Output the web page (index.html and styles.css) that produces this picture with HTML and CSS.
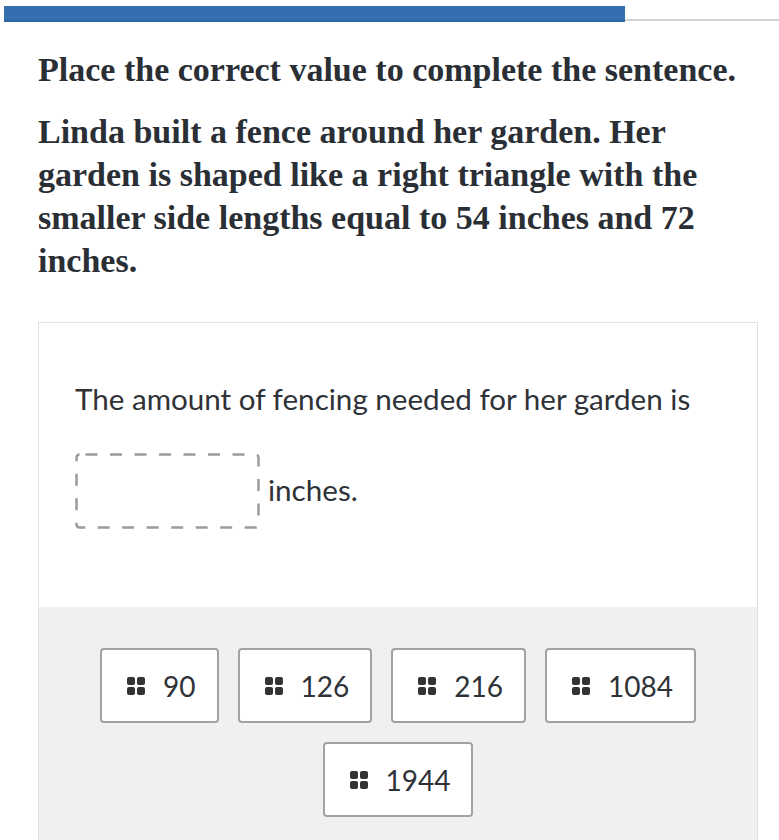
FILE: index.html
```html
<!DOCTYPE html>
<html lang="en">
<head>
<meta charset="utf-8">
<title>Question</title>
<link rel="stylesheet" href="styles.css">
</head>
<body>
<div class="progress">
  <div class="progress-fill"></div>
  <div class="progress-rest"></div>
</div>
<main class="content">
  <h1 class="title">Place the correct value to complete the sentence.</h1>
  <p class="prompt">Linda built a fence around her garden. Her garden is shaped like a right triangle with the smaller side lengths equal to 54 inches and 72 inches.</p>
  <section class="card">
    <div class="card-top">
      <p class="sentence">The amount of fencing needed for her garden is</p>
      <div class="answer-row">
        <div class="dropzone"></div>
        <span class="unit">inches.</span>
      </div>
    </div>
    <div class="card-bottom">
      <div class="chips">
        <div class="chip"><svg class="grip" viewBox="0 0 18 18"><rect x="0" y="0" width="8" height="8" rx="2"/><rect x="10" y="0" width="8" height="8" rx="2"/><rect x="0" y="10" width="8" height="8" rx="2"/><rect x="10" y="10" width="8" height="8" rx="2"/></svg><span>90</span></div>
        <div class="chip"><svg class="grip" viewBox="0 0 18 18"><rect x="0" y="0" width="8" height="8" rx="2"/><rect x="10" y="0" width="8" height="8" rx="2"/><rect x="0" y="10" width="8" height="8" rx="2"/><rect x="10" y="10" width="8" height="8" rx="2"/></svg><span>126</span></div>
        <div class="chip"><svg class="grip" viewBox="0 0 18 18"><rect x="0" y="0" width="8" height="8" rx="2"/><rect x="10" y="0" width="8" height="8" rx="2"/><rect x="0" y="10" width="8" height="8" rx="2"/><rect x="10" y="10" width="8" height="8" rx="2"/></svg><span>216</span></div>
        <div class="chip"><svg class="grip" viewBox="0 0 18 18"><rect x="0" y="0" width="8" height="8" rx="2"/><rect x="10" y="0" width="8" height="8" rx="2"/><rect x="0" y="10" width="8" height="8" rx="2"/><rect x="10" y="10" width="8" height="8" rx="2"/></svg><span>1084</span></div>
        <div class="chip"><svg class="grip" viewBox="0 0 18 18"><rect x="0" y="0" width="8" height="8" rx="2"/><rect x="10" y="0" width="8" height="8" rx="2"/><rect x="0" y="10" width="8" height="8" rx="2"/><rect x="10" y="10" width="8" height="8" rx="2"/></svg><span>1944</span></div>
      </div>
    </div>
  </section>
</main>
</body>
</html>
```
FILE: styles.css
```css
html, body {
  margin: 0;
  padding: 0;
  background: #ffffff;
}
body {
  height: 840px;
  overflow: hidden;
}
.progress {
  display: flex;
  align-items: flex-end;
  padding: 6px 0 0 4px;
  height: 16px;
}
.progress-fill {
  width: 621px;
  height: 16px;
  background: #3470b0;
  box-sizing: border-box;
  border-bottom: 2px solid #2d65a3;
}
.progress-rest {
  flex: 1;
  height: 2px;
  margin-bottom: 1px;
  background: #d2d2d2;
}
.content {
  padding: 26px 0 0 38px;
}
.title {
  margin: 0;
  font-family: "Liberation Serif", "Times New Roman", serif;
  font-weight: bold;
  font-size: 34px;
  line-height: 43px;
  color: #2a2e35;
}
.prompt {
  margin: 19px 38px 0 0;
  font-family: "Liberation Serif", "Times New Roman", serif;
  font-weight: bold;
  font-size: 34px;
  line-height: 43px;
  color: #2a2e35;
}
.card {
  margin-top: 40px;
  width: 720px;
  box-sizing: border-box;
  border: 1px solid #e1e1e1;
  border-bottom: none;
}
.card-top {
  background: #ffffff;
  padding: 58px 36px 0 36px;
  height: 284px;
  box-sizing: border-box;
}
.sentence {
  margin: 0;
  font-family: Lato, "Liberation Sans", sans-serif;
  font-size: 29.6px;
  line-height: 35px;
  color: #2f3237;
}
.answer-row {
  display: flex;
  align-items: center;
  gap: 8px;
  margin-top: 37px;
}
.dropzone {
  width: 185px;
  height: 76px;
  box-sizing: border-box;
  background-image: url("data:image/svg+xml,%3Csvg xmlns='http://www.w3.org/2000/svg' width='185' height='76'%3E%3Crect x='1.5' y='1.5' width='182' height='73' rx='3' fill='none' stroke='%239b9b9b' stroke-width='2.5' stroke-dasharray='12 12.5' stroke-dashoffset='-6'/%3E%3C/svg%3E");
  background-repeat: no-repeat;
}
.unit {
  font-family: Lato, "Liberation Sans", sans-serif;
  font-size: 29.6px;
  color: #2f3237;
  margin-top: -3px;
}
.card-bottom {
  background: #f0f0f0;
  padding: 41px 20px 0 20px;
  height: 233px;
  box-sizing: border-box;
  overflow: hidden;
}
.chips {
  display: flex;
  flex-wrap: wrap;
  justify-content: center;
  gap: 19px 19px;
}
.chip {
  display: flex;
  align-items: center;
  gap: 18px;
  height: 75px;
  box-sizing: border-box;
  padding: 0 21px 0 25px;
  background: #ffffff;
  border: 2px solid #a2a2a2;
  border-radius: 4px;
  font-family: Lato, "Liberation Sans", sans-serif;
  font-size: 28px;
  color: #2f3237;
}
.grip {
  width: 18px;
  height: 18px;
  fill: #333333;
  flex: none;
}
```
